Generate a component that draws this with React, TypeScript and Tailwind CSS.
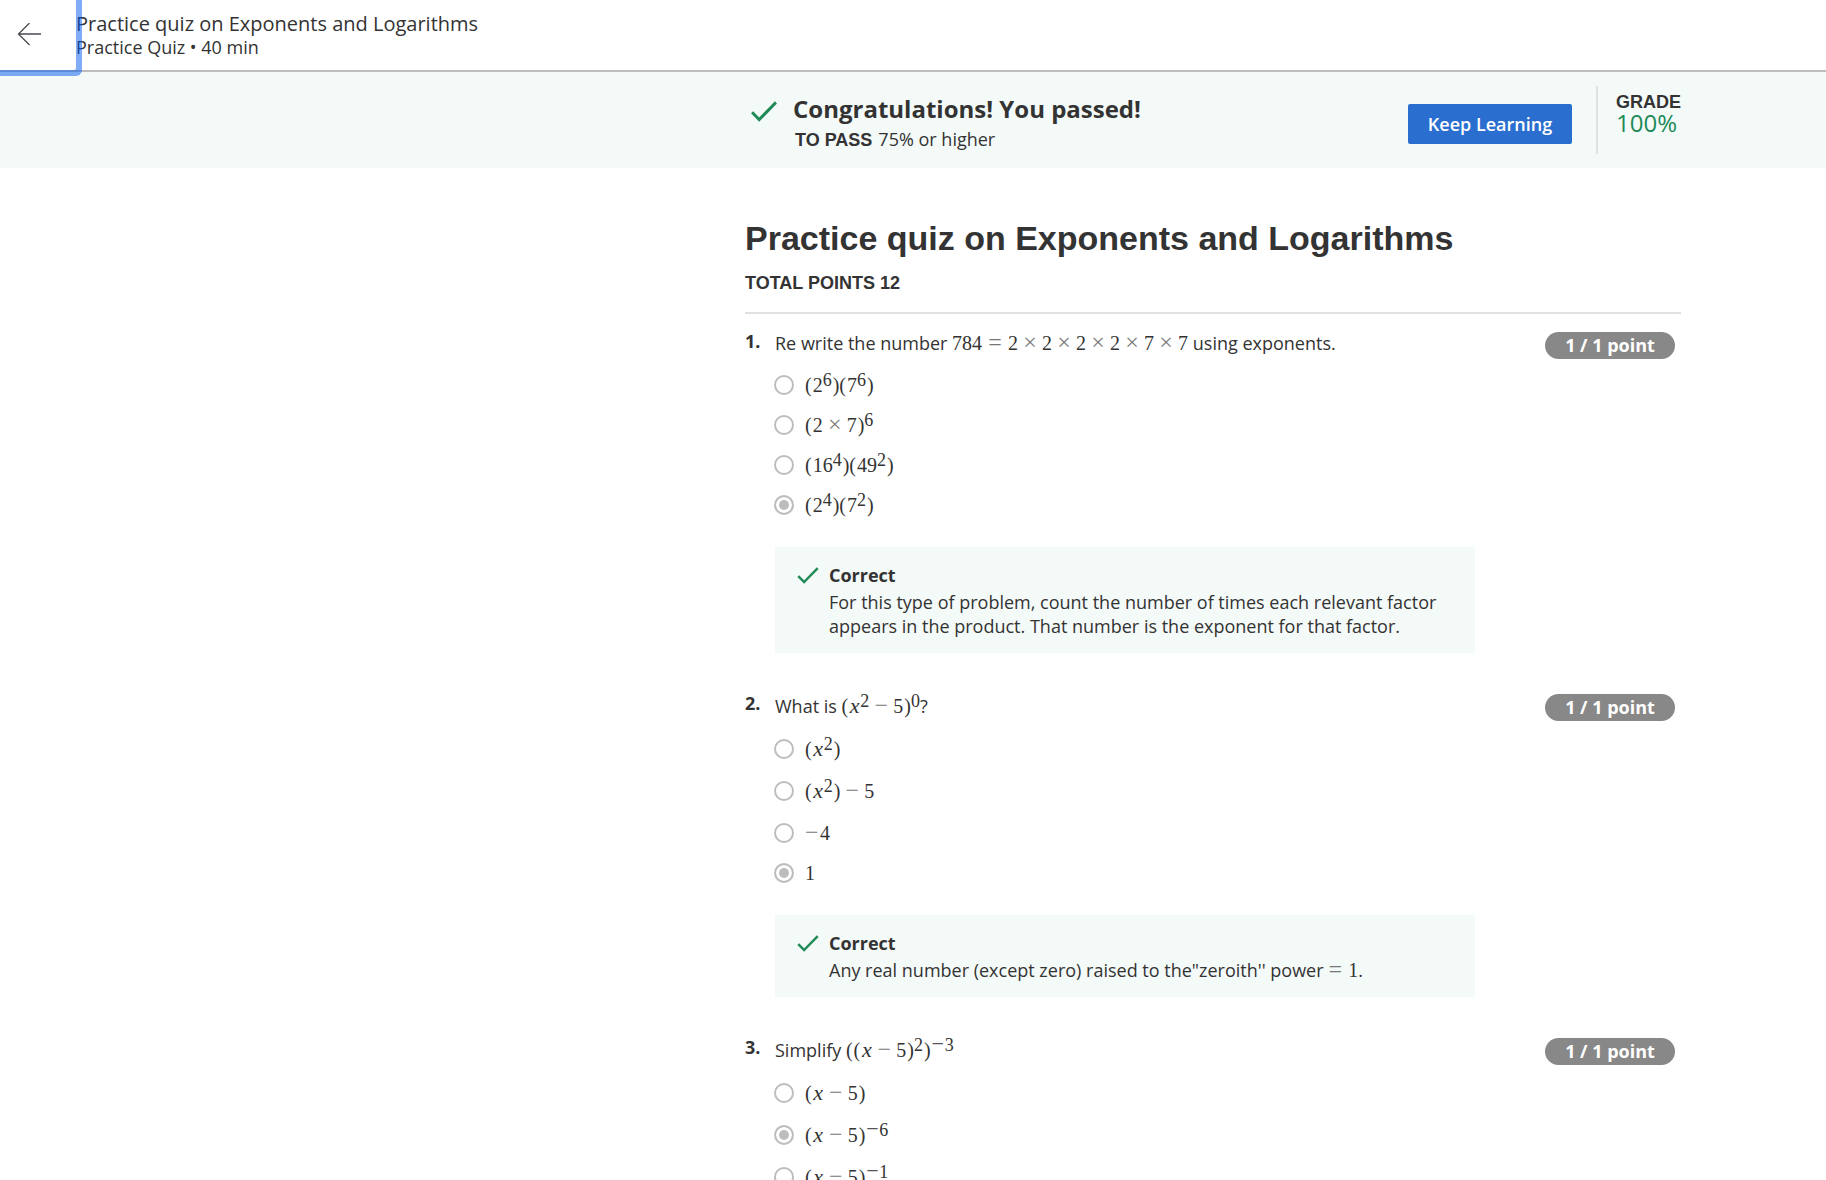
import type { ReactNode } from "react";

const SERIF = "font-['Liberation_Serif',serif]";

function M({ children }: { children: ReactNode }) {
  return (
    <span className={`${SERIF} text-[20px] leading-none whitespace-nowrap`}>{children}</span>
  );
}

function X() {
  return <i className="inline-block w-[11px] text-center text-[22px] leading-none">x</i>;
}

function Op({ children }: { children: ReactNode }) {
  return <span className="inline-block w-6 text-center text-[24px] leading-5 text-[#777]">{children}</span>;
}

function Eq() {
  return <span className="inline-block w-[26px] text-center text-[24px] leading-5 text-[#777]">=</span>;
}

function Neg() {
  return <span className="inline-block w-[15px] text-[24px] leading-5 text-[#777]">−</span>;
}

function L() {
  return <span className="pr-px">(</span>;
}

function R() {
  return <span className="pl-px">)</span>;
}

function Sup({ neg, children }: { neg?: boolean; children: ReactNode }) {
  return (
    <sup className="static align-[6px] text-[18px] leading-[0]">
      {neg && <span className="inline-block w-[14px] text-center text-[22px] leading-[0] text-[#555]">−</span>}
      {children}
    </sup>
  );
}

function Check({ className }: { className: string }) {
  return (
    <svg className={className} viewBox="0 0 26 21" fill="none" stroke="#208a58" strokeWidth="3" aria-hidden="true">
      <path d="M1 11.2 L8.2 18.6 L25 1.4" />
    </svg>
  );
}

type Option = { content: ReactNode; checked?: boolean; tall?: boolean };

function Question({
  number,
  prompt,
  options,
  tall,
  feedback,
}: {
  number: number;
  prompt: ReactNode;
  options: Option[];
  tall?: boolean;
  feedback?: ReactNode;
}) {
  return (
    <section className="flex items-start">
      <div className="w-[30px] shrink-0 text-[18px] leading-[18px] font-bold">{number}.</div>
      <fieldset className="min-w-0 max-w-[700px] flex-1">
        <legend className={tall ? "block h-[35px] text-[18px] leading-6" : "block h-[33px] text-[18px] leading-[22px]"}>
          {prompt}
        </legend>
        {options.map((option, i) => (
          <label key={i} className={option.tall ? "flex h-[42px] items-start gap-[11px]" : "flex h-10 items-start gap-[11px]"}>
            <input
              type="radio"
              name={`question-${number}`}
              defaultChecked={option.checked}
              disabled
              className="mt-2.5 -ml-px size-5 shrink-0 appearance-none rounded-full border-2 border-[#bdbdbd] bg-white checked:bg-[#bdbdbd] checked:shadow-[inset_0_0_0_3px_white]"
            />
            <span className="block leading-[42px]">{option.content}</span>
          </label>
        ))}
        {feedback && (
          <div className="mt-[22px] flex items-start bg-[#f4faf8] pt-[15px] pr-7 pb-[15px] pl-[22px]">
            <Check className="mt-[5px] h-[17px] w-[22px] shrink-0" />
            <div className="ml-2.5 text-[18px]">
              <p className="mb-0.5 leading-[26px] font-bold">Correct</p>
              <p className="leading-6">{feedback}</p>
            </div>
          </div>
        )}
      </fieldset>
      <div className="mr-1.5 ml-auto flex h-[27px] w-[130px] items-center justify-center rounded-full bg-[#888] text-[18px] font-bold text-white">
        1 / 1 point
      </div>
    </section>
  );
}

export default function App() {
  return (
    <div className="h-screen overflow-hidden bg-white font-['Open_Sans',sans-serif] text-[#333]">
      <header className="flex h-[72px] items-start border-b-2 border-[#bdbdbd] bg-white">
        <button
          type="button"
          aria-label="Back"
          className="relative z-10 flex h-[70px] w-[76px] shrink-0 items-center rounded-br-[2px] pl-[17px] shadow-[0_0_0_6px_rgba(0,87,240,0.5)]"
        >
          <svg className="h-6 w-6" viewBox="0 0 24 24" fill="none" stroke="#4a4a52" strokeWidth="1.3" aria-hidden="true">
            <path d="M24 11 H1.5 M12.5 0 L1.5 11 L12.5 22" />
          </svg>
        </button>
        <div className="pt-3">
          <h2 className="text-[20px] leading-6">Practice quiz on Exponents and Logarithms</h2>
          <p className="text-[18px] leading-[22px]">Practice Quiz • 40 min</p>
        </div>
      </header>

      <div className="bg-[#f4faf8] pl-[600px]">
        <div className="mx-auto flex h-24 max-w-[936px] items-start">
          <Check className="mt-[29px] ml-1.5 h-[21px] w-[26px] shrink-0" />
          <div className="ml-4 pt-[19px]">
            <h2 className="text-[24px] leading-9 font-bold">Congratulations! You passed!</h2>
            <p className="pl-0.5 text-[18px] leading-6">
              <strong className="mr-1.5 font-['Liberation_Sans',sans-serif]">TO PASS</strong>
              75% or higher
            </p>
          </div>
          <button
            type="button"
            className="mt-8 ml-auto h-10 w-[164px] rounded-[2px] bg-[#2a6fcf] text-[18px] font-semibold text-white"
          >
            Keep Learning
          </button>
          <div className="mt-3.5 ml-6 h-[68px] w-[85px] border-l-2 border-[#e1e1e1] pt-[7px] pl-[18px]">
            <div className="font-['Liberation_Sans',sans-serif] text-[18px] leading-[18px] font-bold">GRADE</div>
            <div className="text-[24px] leading-6 text-[#208a58]">100%</div>
          </div>
        </div>
      </div>

      <main className="pl-[600px]">
        <div className="mx-auto max-w-[936px] pt-[50px]">
          <div className="border-b-2 border-[#e1e1e1] pb-[17px] font-['Liberation_Sans',sans-serif] font-bold">
            <h1 className="text-[34px] leading-10">Practice quiz on Exponents and Logarithms</h1>
            <p className="mt-[13px] text-[18px] leading-6">TOTAL POINTS 12</p>
          </div>
          <div className="flex flex-col gap-[41px] pt-[18px]">
            <Question
              number={1}
              prompt={
                <>
                  Re write the number{" "}
                  <M>784<Eq />2<Op>×</Op>2<Op>×</Op>2<Op>×</Op>2<Op>×</Op>7<Op>×</Op>7</M>{" "}
                  using exponents.
                </>
              }
              options={[
                { content: <M><L />2<Sup>6</Sup><R /><L />7<Sup>6</Sup><R /></M> },
                { content: <M><L />2<Op>×</Op>7<R /><Sup>6</Sup></M> },
                { content: <M><L />16<Sup>4</Sup><R /><L />49<Sup>2</Sup><R /></M> },
                { content: <M><L />2<Sup>4</Sup><R /><L />7<Sup>2</Sup><R /></M>, checked: true },
              ]}
              feedback="For this type of problem, count the number of times each relevant factor appears in the product. That number is the exponent for that factor."
            />
            <Question
              number={2}
              tall
              prompt={<>What is <M><L /><X /><Sup>2</Sup><Op>−</Op>5<R /><Sup>0</Sup></M>?</>}
              options={[
                { content: <M><L /><X /><Sup>2</Sup><R /></M>, tall: true },
                { content: <M><L /><X /><Sup>2</Sup><R /><Op>−</Op>5</M>, tall: true },
                { content: <M><Neg />4</M> },
                { content: <M>1</M>, checked: true },
              ]}
              feedback={<>Any real number (except zero) raised to the"zeroith'' power <M><span className="-ml-1.5"><Eq /></span>1</M>.</>}
            />
            <Question
              number={3}
              tall
              prompt={<>Simplify <M><L /><L /><X /><Op>−</Op>5<R /><Sup>2</Sup><R /><Sup neg>3</Sup></M></>}
              options={[
                { content: <M><L /><X /><Op>−</Op>5<R /></M>, tall: true },
                { content: <M><L /><X /><Op>−</Op>5<R /><Sup neg>6</Sup></M>, checked: true, tall: true },
                { content: <M><L /><X /><Op>−</Op>5<R /><Sup neg>1</Sup></M>, tall: true },
              ]}
            />
          </div>
        </div>
      </main>
    </div>
  );
}
